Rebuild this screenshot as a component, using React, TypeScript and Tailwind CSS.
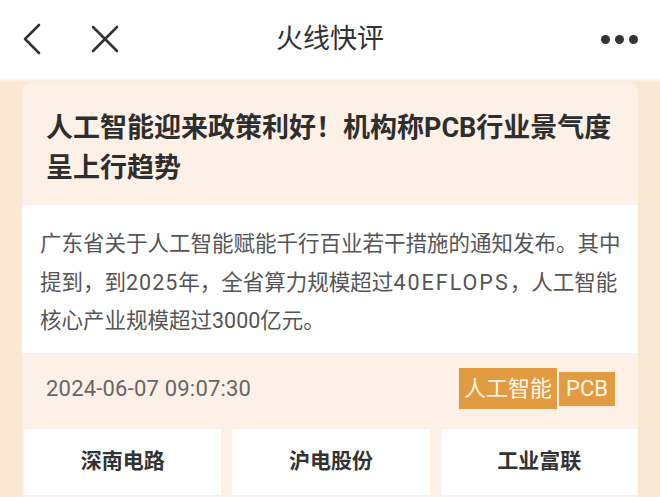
const stocks = ["深南电路", "沪电股份", "工业富联"];

const App = () => {
  return (
    <div className="w-[660px] h-[497px] overflow-hidden bg-[#fbe8d4] flex flex-col font-['Roboto','Noto_Sans_CJK_SC',sans-serif]">
      {/* 顶部导航 */}
      <header className="h-[78px] bg-white flex items-center justify-between px-[20px] shrink-0 relative">
        <div className="flex items-center gap-[44px]">
          <svg width="26" height="34" viewBox="0 0 26 34" fill="none">
            <polyline points="19,3 5,17 19,31" stroke="#333" strokeWidth="2.6" strokeLinecap="round" strokeLinejoin="round" />
          </svg>
          <svg width="30" height="30" viewBox="0 0 30 30" fill="none">
            <path d="M3 3 L27 27 M27 3 L3 27" stroke="#333" strokeWidth="2.6" strokeLinecap="round" />
          </svg>
        </div>
        <h1 className="absolute left-0 right-0 text-center text-[27px] text-[#333] pointer-events-none">火线快评</h1>
        <div className="flex items-center gap-[5px] pr-[2px]">
          <span className="w-[9px] h-[9px] rounded-full bg-[#333]" />
          <span className="w-[9px] h-[9px] rounded-full bg-[#333]" />
          <span className="w-[9px] h-[9px] rounded-full bg-[#333]" />
        </div>
      </header>

      <div className="h-[4px] bg-gradient-to-b from-white to-[#fbe8d4] shrink-0" />

      <main className="mx-[22px] flex-1 flex flex-col rounded-t-[10px] bg-[#fdf0e6]">
        <h2 className="pt-[26px] pb-[17px] pl-[24px] pr-[8px] text-[27px] leading-[40px] font-bold text-[#2e2e2e]">
          人工智能迎来政策利好！机构称PCB行业景气度呈上行趋势
        </h2>

        <section className="bg-white pt-[20px] pb-[12px] pl-[18px] pr-[10px] text-[21.5px] leading-[38.5px] text-[#555]">
          广东省关于人工智能赋能千行百业若干措施的通知发布。其中
          <br />
          提到，到<span className="tracking-[1px]">2025</span>年，全省算力规模超过<span className="tracking-[2px]">40EFLOPS</span>，人工智能
          <br />
          核心产业规模超过3000亿元。
        </section>

        <div className="h-[76px] flex items-center justify-between pl-[24px] pr-[23px] pb-[4px]">
          <span className="text-[22px] text-[#666] tracking-[0.2px]">2024-06-07 09:07:30</span>
          <div className="flex items-center gap-[2px]">
            <span className="h-[41px] px-[5px] flex items-center bg-[#e29b40] text-[22px] text-[#fff6ea]">人工智能</span>
            <span className="h-[34px] px-[7px] flex items-center bg-[#e29b40] text-[22px] text-[#fff6ea]">PCB</span>
          </div>
        </div>

        <div className="grid grid-cols-3 gap-[11px] pl-[2px]">
          {stocks.map((s) => (
            <div key={s} className="h-[66px] bg-white flex items-center justify-center text-[21px] font-bold text-[#333]">
              {s}
            </div>
          ))}
        </div>
      </main>
    </div>
  );
};

export default App;
